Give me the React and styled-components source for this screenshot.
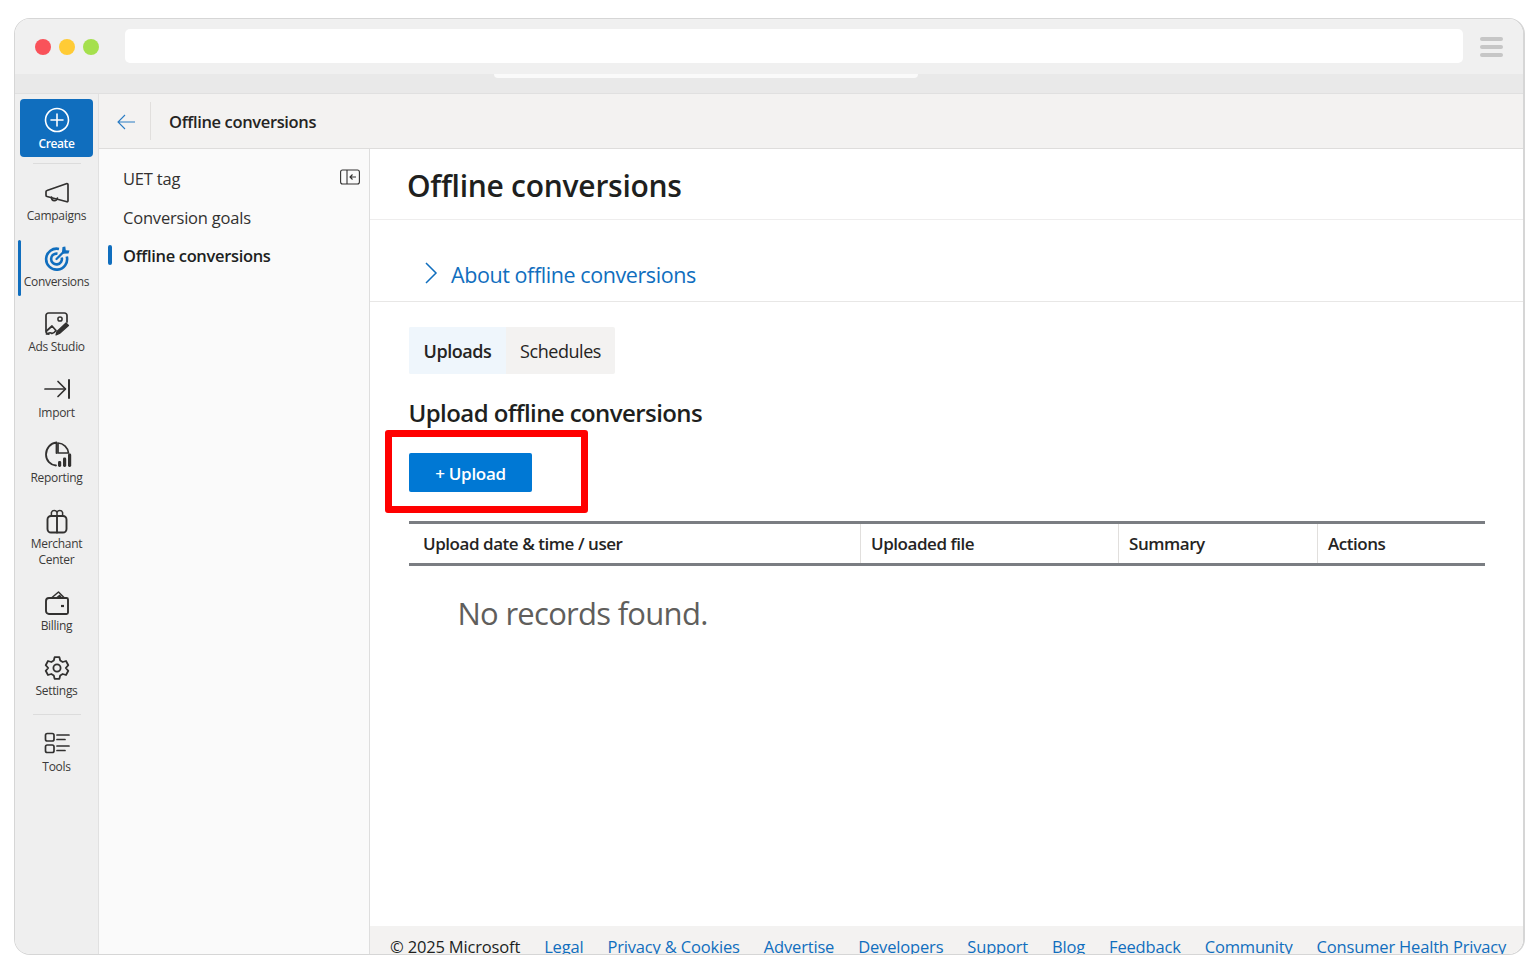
import React from 'react'
import styled, { createGlobalStyle } from 'styled-components'

const GlobalStyle = createGlobalStyle`
  html, body { margin: 0; padding: 0; background: #fff; }
  body { font-family: "Open Sans", "Liberation Sans", sans-serif; color: #201f1e; }
  * { box-sizing: border-box; }
`

const Page = styled.div`
  width: 1538px;
  height: 969px;
  padding: 18px 13px 14px 14px;
  overflow: hidden;
`

const Window = styled.div`
  width: 100%;
  height: 100%;
  display: flex;
  flex-direction: column;
  overflow: hidden;
  border: 1px solid #d6d6d6;
  border-width: 1px 2px 1px 1px;
  border-radius: 16px;
  background: #fff;
`

const TitleBar = styled.div`
  height: 55px;
  flex: none;
  display: flex;
  align-items: center;
  padding: 0 20px 0 20px;
  background: #f0f0f0;
`

const Dots = styled.div`
  display: flex;
  gap: 8px;
  margin-right: 26px;
`

const Dot = styled.span`
  width: 16px;
  height: 16px;
  border-radius: 50%;
  background: ${p => p.$color};
`

const AddressBar = styled.div`
  flex: 1;
  height: 34px;
  margin-top: -2px;
  background: #fff;
  border-radius: 5px;
`

const Burger = styled.div`
  width: 23px;
  margin-left: 17px;
  display: flex;
  flex-direction: column;
  gap: 4px;
  span {
    display: block;
    height: 4px;
    border-radius: 2px;
    background: #c6c6c6;
  }
`

const TabStrip = styled.div`
  height: 20px;
  flex: none;
  display: flex;
  justify-content: center;
  background: #e9e9e9;
  border-bottom: 1px solid #e0e0e0;
`

const TabSliver = styled.div`
  width: 424px;
  height: 4px;
  margin-left: -127px;
  background: #fafafa;
  border-radius: 0 0 6px 6px;
`

const Body = styled.div`
  flex: 1;
  min-height: 0;
  display: flex;
`

const Rail = styled.nav`
  width: 84px;
  flex: none;
  display: flex;
  flex-direction: column;
  align-items: center;
  padding: 5px 5px 0 5px;
  background: #efefef;
  border-right: 1px solid #e1e1e1;
`

const CreateButton = styled.button`
  width: 73px;
  height: 58px;
  flex: none;
  display: flex;
  flex-direction: column;
  align-items: center;
  padding: 8px 0 0;
  border: 0;
  border-radius: 4px;
  background: #106ebe;
  color: #fff;
  font: 600 12px/16px "Open Sans", sans-serif;
  letter-spacing: -0.4px;
  svg { margin-bottom: 3px; }
`

const RailDivider = styled.div`
  width: 48px;
  height: 1px;
  flex: none;
  background: #dcdcdc;
  margin: ${p => p.$margin};
`

const RailItem = styled.a`
  position: relative;
  width: 100%;
  flex: none;
  display: flex;
  flex-direction: column;
  align-items: center;
  gap: 3px;
  margin-bottom: 22px;
  font-size: 12px;
  line-height: 16.5px;
  letter-spacing: -0.3px;
  text-align: center;
  color: #3b3a39;
  ${p => p.$active && `
    &::before {
      content: '';
      position: absolute;
      left: -2px;
      top: -7px;
      width: 3px;
      height: 56px;
      border-radius: 2px;
      background: #106ebe;
    }
  `}
`

const RailIcon = styled.svg`
  width: 24px;
  height: 24px;
  overflow: visible;
  fill: none;
  stroke: #323130;
  stroke-width: 1.7;
  stroke-linecap: round;
  stroke-linejoin: round;
`

const Workspace = styled.div`
  flex: 1;
  min-width: 0;
  display: flex;
  flex-direction: column;
`

const Header = styled.header`
  height: 55px;
  flex: none;
  display: flex;
  align-items: center;
  background: #f3f2f1;
  border-bottom: 1px solid #dedddc;
`

const BackButton = styled.div`
  width: 52px;
  height: 38px;
  display: flex;
  align-items: center;
  justify-content: center;
  padding: 2px 0 0 2px;
  border-right: 1px solid #e1dfdd;
  margin-right: 18px;
`

const HeaderTitle = styled.div`
  font-size: 16.5px;
  font-weight: 600;
  letter-spacing: -0.35px;
  color: #252423;
`

const Split = styled.div`
  flex: 1;
  min-height: 0;
  display: flex;
`

const SideNav = styled.aside`
  position: relative;
  width: 271px;
  flex: none;
  padding-top: 10px;
  background: #fafafa;
  border-right: 1px solid #dedede;
`

const SideLink = styled.div`
  position: relative;
  height: 38.7px;
  display: flex;
  align-items: center;
  padding-left: 24px;
  font-size: 16.5px;
  letter-spacing: ${p => (p.$active ? '-0.33px' : '-0.2px')};
  font-weight: ${p => (p.$active ? 600 : 400)};
  color: ${p => (p.$active ? '#201f1e' : '#323130')};
  ${p => p.$active && `
    &::before {
      content: '';
      position: absolute;
      left: 9px;
      top: 9px;
      width: 4px;
      height: 20px;
      border-radius: 2px;
      background: #106ebe;
    }
  `}
`

const Collapse = styled.svg`
  position: absolute;
  top: 20px;
  right: 9px;
  width: 20px;
  height: 16px;
  fill: none;
  stroke: #323130;
  stroke-width: 1.1;
`

const Main = styled.main`
  position: relative;
  flex: 1;
  min-width: 0;
  display: flex;
  flex-direction: column;
  background: #fff;
`

const PageTitleBar = styled.div`
  height: 71px;
  flex: none;
  display: flex;
  align-items: center;
  padding: 2px 0 0 37px;
  border-bottom: 1px solid #eeeded;
`

const PageTitle = styled.h1`
  margin: 0;
  font-size: 30px;
  font-weight: 600;
  letter-spacing: -0.26px;
  color: #201f1e;
`

const AboutRow = styled.div`
  height: 82px;
  flex: none;
  display: flex;
  align-items: center;
  gap: 13px;
  padding: 28px 0 0 54px;
  border-bottom: 1px solid #e8e7e6;
  font-size: 21.5px;
  letter-spacing: -0.42px;
  color: #106ebe;
  svg { margin-bottom: 4px; }
`

const Section = styled.div`
  flex: 1;
  padding: 25px 39px 0;
`

const Tabs = styled.div`
  display: inline-flex;
  height: 47px;
  border-radius: 2px;
  overflow: hidden;
  background: #f3f2f1;
`

const TabButton = styled.div`
  width: ${p => p.$width}px;
  display: flex;
  align-items: center;
  justify-content: center;
  font-size: 18px;
  letter-spacing: -0.45px;
  font-weight: ${p => (p.$active ? 600 : 400)};
  background: ${p => (p.$active ? '#eff6fc' : 'transparent')};
  color: #252423;
`

const SectionTitle = styled.h2`
  margin: 22px 0 0 -0.5px;
  font-size: 24px;
  line-height: 34px;
  font-weight: 600;
  letter-spacing: -0.58px;
  color: #201f1e;
`

const UploadButton = styled.button`
  display: block;
  width: 123px;
  height: 39px;
  margin-top: 23px;
  padding: 2px 0 0;
  border: 0;
  border-radius: 2px;
  background: #0078d4;
  color: #fff;
  font: 600 17px "Open Sans", sans-serif;
  letter-spacing: -0.3px;
`

const Callout = styled.div`
  position: absolute;
  left: 15px;
  top: 281px;
  width: 203px;
  height: 83px;
  border: 7px solid #ff0000;
  border-radius: 3px;
  pointer-events: none;
`

const Table = styled.div`
  margin-top: 29px;
  display: grid;
  grid-template-columns: 451px 258px 199px 168px;
  width: 1076px;
  height: 45px;
  border-top: 3px solid #7a7d82;
  border-bottom: 3px solid #7a7d82;
`

const HeaderCell = styled.div`
  display: flex;
  align-items: center;
  padding-left: ${p => p.$pad}px;
  font-size: 17px;
  font-weight: 600;
  letter-spacing: -0.45px;
  color: #252423;
  border-left: ${p => (p.$first ? '0' : '1px solid #e1dfdd')};
`

const Empty = styled.div`
  margin: 26px 0 0 48.5px;
  font-size: 31px;
  line-height: 42px;
  letter-spacing: -0.72px;
  color: #605e5c;
`

const Footer = styled.footer`
  height: 28px;
  flex: none;
  display: flex;
  gap: 24px;
  padding: 9px 0 0 20px;
  overflow: hidden;
  background: #f3f2f1;
  font-size: 16.5px;
  line-height: 24px;
  letter-spacing: -0.17px;
  white-space: nowrap;
`

const FooterLink = styled.a`
  color: #106ebe;
`

const railItems = [
  {
    label: 'Campaigns',
    icon: (
      <>
        <path d="M2 9.500 22 2.500a1 1 0 0 1 1 1V20a1 1 0 0 1-1 .8L2 15.500a1.200 1.200 0 0 1-1-1.200v-3.600a1.200 1.200 0 0 1 1-1.200Z" />
        <path d="M6.500 16c-.3 2.200 1 3.600 2.800 3.600S12.200 18.500 12.400 17" />
      </>
    ),
  },
  {
    label: 'Conversions',
    active: true,
    icon: (
      <>
        <g stroke="#106ebe" strokeWidth="2.600" strokeLinecap="butt">
          <path d="M21.800 9.500A10.500 10.500 0 1 1 14 1.900" />
          <path d="M16.700 10.500a5.400 5.400 0 1 1-4.200-3.800" />
        </g>
        <path d="M11.500 12 19 4.500" stroke="#106ebe" strokeWidth="2.200" />
        <path d="M17.500 0 16.800 6.800 23.500 6.400 24.500 3.600 20.800 3.200 20.300 -.4Z" fill="#106ebe" stroke="none" />
      </>
    ),
  },
  {
    label: 'Ads Studio',
    icon: (
      <>
        <path d="M4 22a2.500 2.500 0 0 1-3-2.500V3.500A2.500 2.500 0 0 1 3.500 1h16A2.500 2.500 0 0 1 22 3.500V10" />
        <circle cx="15" cy="7" r="2.100" strokeWidth="1.500" />
        <path d="M1.500 19 7 14l4 4.500c-1.500 2-3.500 3.500-5 2.500s-3.500 1-4.500 1" />
        <path d="m12 19.500 9-8.500 2.500 2.500-9 8-3.500 1.500 1-3.500Z" fill="#323130" strokeWidth="1.200" />
      </>
    ),
  },
  {
    label: 'Import',
    icon: (
      <>
        <path d="M0 11h20" />
        <path d="m13 3.500 7.500 7.500-7.500 7.500" />
        <path d="M24 2v18" strokeWidth="2" />
      </>
    ),
  },
  {
    label: 'Reporting',
    icon: (
      <>
        <path d="M10 23.500C4.500 23 0 18.500 0 12.500S4.500 1 10.500 .5V11" strokeWidth="1.800" transform="translate(1 -1)" />
        <path d="M13 0a11 11 0 0 1 10.500 10H13V0Z" strokeWidth="1.700" />
        <g fill="#323130" stroke="none">
          <rect x="13" y="18" width="3.200" height="6" rx="1.400" />
          <rect x="18" y="14.500" width="3.200" height="9.500" rx="1.400" />
          <rect x="23" y="10.500" width="3.200" height="13.500" rx="1.400" />
        </g>
      </>
    ),
  },
  {
    label: 'Merchant Center',
    icon: (
      <>
        <rect x="2.500" y="7" width="19" height="16.500" rx="3.500" strokeWidth="1.900" />
        <path d="M12 7v16.500" strokeWidth="1.900" />
        <path d="M12 7V3.500a3 3 0 0 0-5.600 0V7M12 7V3.500a3 3 0 0 1 5.600 0V7" strokeWidth="1.500" />
      </>
    ),
  },
  {
    label: 'Billing',
    icon: (
      <>
        <path d="M1 10a3 3 0 0 1 3-3h17.500A1.500 1.500 0 0 1 23 8.500V21.500A1.500 1.500 0 0 1 21.500 23H4a3 3 0 0 1-3-3V10Z" strokeWidth="1.900" />
        <path d="M7 6.500 13.500 1 19.500 7M12 6.500l2.500-2L16.500 7" strokeWidth="1.500" />
        <path d="M16 15h3" strokeWidth="2.200" strokeLinecap="butt" />
      </>
    ),
  },
  {
    label: 'Settings',
    icon: (
      <>
        <path d="M9.600 1.200 14.400 1.200 15.200 4.500 17.700 6 21 5 23.300 9.200 20.800 12 23.300 14.800 21 19 17.700 18 15.200 19.500 14.400 22.800 9.600 22.800 8.800 19.500 6.300 18 3 19 .7 14.800 3.200 12 .7 9.200 3 5 6.300 6 8.800 4.500Z" strokeWidth="1.800" />
        <circle cx="12" cy="12" r="3.600" strokeWidth="1.800" />
      </>
    ),
  },
]

const footerLinks = ['Legal', 'Privacy & Cookies', 'Advertise', 'Developers', 'Support', 'Blog', 'Feedback', 'Community', 'Consumer Health Privacy']

function App () {
  return (
    <Page>
      <GlobalStyle />
      <Window>
        <TitleBar>
          <Dots>
            <Dot $color='#f9525a' />
            <Dot $color='#ffcb35' />
            <Dot $color='#a5e04d' />
          </Dots>
          <AddressBar />
          <Burger><span /><span /><span /></Burger>
        </TitleBar>
        <TabStrip><TabSliver /></TabStrip>
        <Body>
          <Rail>
            <CreateButton>
              <svg width='26' height='26' viewBox='0 0 26 26' fill='none' stroke='#fff' strokeWidth='1.6' strokeLinecap='round'>
                <circle cx='13' cy='13' r='11.5' />
                <path d='M13 7v12M7 13h12' />
              </svg>
              Create
            </CreateButton>
            <RailDivider $margin='6px 0 17.4px' />
            {railItems.map(item => (
              <RailItem key={item.label} $active={item.active}>
                <RailIcon viewBox='0 0 24 24'>{item.icon}</RailIcon>
                <span>{item.label === 'Merchant Center' ? <>Merchant<br />Center</> : item.label}</span>
              </RailItem>
            ))}
            <RailDivider $margin='-8px 0 17.5px' />
            <RailItem>
              <RailIcon viewBox='0 0 24 24'>
                <rect x='.5' y='1.500' width='8.500' height='7.500' rx='1.800' />
                <rect x='.5' y='13' width='8.500' height='7.500' rx='1.800' />
                <path d='M12 3h12M12 7.500h8M12 14h12M12 18.500h8' />
              </RailIcon>
              <span>Tools</span>
            </RailItem>
          </Rail>
          <Workspace>
            <Header>
              <BackButton>
                <svg width='20' height='16' viewBox='0 0 20 16' fill='none' stroke='#2b7cc4' strokeWidth='1.1'>
                  <path d='M19 8H2M9 1 2 8l7 7' />
                </svg>
              </BackButton>
              <HeaderTitle>Offline conversions</HeaderTitle>
            </Header>
            <Split>
              <SideNav>
                <SideLink>UET tag</SideLink>
                <SideLink>Conversion goals</SideLink>
                <SideLink $active>Offline conversions</SideLink>
                <Collapse viewBox='0 0 20 16'>
                  <rect x='.6' y='1' width='18.8' height='14' rx='2' />
                  <path d='M7 1v14M16 8h-6M12.5 5.500 10 8l2.500 2.500' />
                </Collapse>
              </SideNav>
              <Main>
                <PageTitleBar>
                  <PageTitle>Offline conversions</PageTitle>
                </PageTitleBar>
                <AboutRow>
                  <svg width='14' height='24' viewBox='0 0 14 24' fill='none' stroke='#106ebe' strokeWidth='1.5'>
                    <path d='m2 2 10 10L2 22' />
                  </svg>
                  About offline conversions
                </AboutRow>
                <Section>
                  <Tabs>
                    <TabButton $active $width={97}>Uploads</TabButton>
                    <TabButton $width={109}>Schedules</TabButton>
                  </Tabs>
                  <SectionTitle>Upload offline conversions</SectionTitle>
                  <UploadButton>+ Upload</UploadButton>
                  <Table>
                    <HeaderCell $first $pad={14}>Upload date &amp; time / user</HeaderCell>
                    <HeaderCell $pad={10}>Uploaded file</HeaderCell>
                    <HeaderCell $pad={10}>Summary</HeaderCell>
                    <HeaderCell $pad={10}>Actions</HeaderCell>
                  </Table>
                  <Empty>No records found.</Empty>
                </Section>
                <Callout />
                <Footer>
                  <span>© 2025 Microsoft</span>
                  {footerLinks.map(link => <FooterLink key={link}>{link}</FooterLink>)}
                </Footer>
              </Main>
            </Split>
          </Workspace>
        </Body>
      </Window>
    </Page>
  )
}

export default App
